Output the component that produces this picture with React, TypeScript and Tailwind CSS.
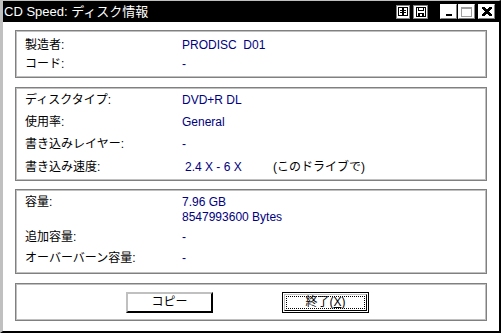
import React from 'react';

const font = { fontFamily: '"Liberation Sans", "Noto Sans CJK JP", sans-serif' };

const Row: React.FC<{ label: string; h: string; children?: React.ReactNode }> = ({ label, h, children }) => (
  <div className={`flex items-center ${h}`}>
    <div className="w-[157px] shrink-0 text-black">{label}</div>
    <div className="text-[#000080]">{children}</div>
  </div>
);

const Panel: React.FC<{ className: string; children: React.ReactNode }> = ({ className, children }) => (
  <div className={`mx-[12px] border border-[#808080] shadow-[inset_0_0_0_1px_#c0c0c0] bg-white ${className}`}>
    {children}
  </div>
);

const TitleBtn: React.FC<{ children: React.ReactNode; className?: string }> = ({ children, className }) => (
  <div
    className={`w-[17px] h-[15px] bg-white border-t border-l border-t-white border-l-white border-r border-b border-r-[#808080] border-b-[#808080] flex items-center justify-center ${className ?? ''}`}
  >
    {children}
  </div>
);

export default function App() {
  return (
    <div
      className="w-[501px] h-[333px] bg-white border-l-[3px] border-l-[#c0c0c0] border-t border-t-[#c0c0c0] border-r-2 border-r-black border-b-2 border-b-black text-[12px] flex flex-col"
      style={font}
    >
      {/* title bar */}
      <div className="h-[21px] bg-black flex items-center pl-[1px] pr-[4px] shrink-0">
        <span className="text-white text-[13px] leading-none">CD Speed: ディスク情報</span>
        <div className="ml-auto flex items-center">
          <div className="w-[14px] h-[14px] bg-white border border-[#808080] flex items-center justify-center">
            <svg width="10" height="9" viewBox="0 0 10 9" shapeRendering="crispEdges">
              <rect x="0.5" y="0.5" width="4" height="8" fill="white" stroke="black" />
              <rect x="5.5" y="0.5" width="4" height="8" fill="white" stroke="black" />
              <path d="M2 3h2M2 5h2M6 3h2M6 5h2" stroke="black" />
            </svg>
          </div>
          <div className="w-[15px] h-[14px] ml-[3px] bg-white border border-[#808080] flex items-center justify-center">
            <svg width="10" height="10" viewBox="0 0 10 10" shapeRendering="crispEdges">
              <rect x="0.5" y="0.5" width="9" height="9" fill="white" stroke="black" />
              <rect x="2.5" y="0.5" width="5" height="3" fill="white" stroke="black" />
              <rect x="2" y="6" width="6" height="4" fill="black" />
              <rect x="4" y="7" width="2" height="2" fill="white" />
            </svg>
          </div>
          <TitleBtn className="ml-[12px]">
            <div className="w-[6px] h-[2px] bg-black mt-[7px]" />
          </TitleBtn>
          <TitleBtn className="ml-[1px]">
            <div className="w-[11px] h-[10px] border border-[#a0a0a0] border-t-2" />
          </TitleBtn>
          <TitleBtn className="ml-[3px]">
            <svg width="10" height="9" viewBox="0 0 10 9" shapeRendering="crispEdges">
              <path d="M0 0h3l2 2.2L7 0h3v1L7 4.5 10 8v1H7L5 6.8 3 9H0V8l3-3.5L0 1z" fill="black" />
            </svg>
          </TitleBtn>
        </div>
      </div>

      <Panel className="mt-[8px] h-[48px] pt-[4px] pl-[9px]">
        <Row label="製造者:" h="h-[19px]">PRODISC&nbsp;&nbsp;D01</Row>
        <Row label="コード:" h="h-[19px]">-</Row>
      </Panel>

      <Panel className="mt-[9px] h-[94px] pt-[1px] pl-[9px]">
        <Row label="ディスクタイプ:" h="h-[22px]">DVD+R DL</Row>
        <Row label="使用率:" h="h-[22px]">General</Row>
        <Row label="書き込みレイヤー:" h="h-[22px]">-</Row>
        <div className="flex items-center h-[23px]">
          <div className="w-[160px] shrink-0">書き込み速度:</div>
          <div className="w-[88px] text-[#000080]">2.4 X - 6 X</div>
          <div className="text-black">(このドライブで)</div>
        </div>
      </Panel>

      <Panel className="mt-[8px] h-[85px] pt-[5px] pl-[9px]">
        <div className="flex leading-[15px]">
          <div className="w-[157px] shrink-0">容量:</div>
          <div className="text-[#000080]">
            <div>7.96 GB</div>
            <div>8547993600 Bytes</div>
          </div>
        </div>
        <Row label="追加容量:" h="h-[22px] mt-[1px]">-</Row>
        <Row label="オーバーバーン容量:" h="h-[20px]">-</Row>
      </Panel>

      <Panel className="mt-[9px] h-[38px] flex items-center pl-[110px] gap-[69px]">
        <button
          className="w-[87px] h-[21px] bg-white border-t-2 border-l-2 border-t-[#c0c0c0] border-l-[#c0c0c0] border-r-2 border-b-2 border-r-black border-b-black flex items-center justify-center text-black"
        >
          コピー
        </button>
        <button className="w-[87px] h-[21px] bg-white border border-black flex items-center justify-center p-[1px]">
          <div className="w-full h-full border-t border-l border-t-[#c0c0c0] border-l-[#c0c0c0] border-r border-b border-r-black border-b-black p-[1px]">
            <div className="w-full h-full border border-dotted border-black flex items-center justify-center text-black leading-none">
              終了(<span className="underline">X</span>)
            </div>
          </div>
        </button>
      </Panel>
    </div>
  );
}
